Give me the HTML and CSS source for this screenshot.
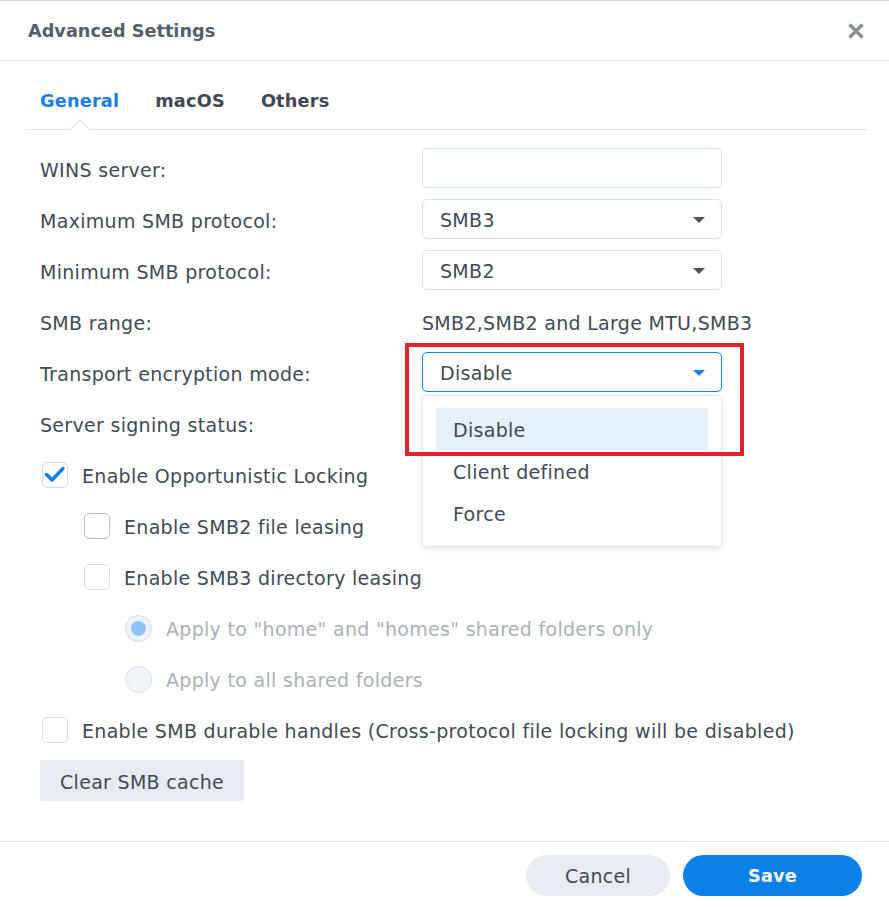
FILE: index.html
```html
<!DOCTYPE html>
<html lang="en">
<head>
<meta charset="utf-8">
<title>Advanced Settings</title>
<link rel="stylesheet" href="styles.css">
</head>
<body>
<div class="dialog">
  <header class="head">
    <h1 class="title">Advanced Settings</h1>
    <span class="close" aria-label="Close">
      <svg width="16" height="16" viewBox="0 0 16 16"><path d="M1.5 1.5 L14.5 14.5 M14.5 1.5 L1.5 14.5" stroke="#8a9096" stroke-width="3.2" fill="none"/></svg>
    </span>
  </header>

  <main class="content">
    <nav class="tabs">
      <span class="tab active">General</span>
      <span class="tab">macOS</span>
      <span class="tab">Others</span>
    </nav>

    <div class="form">
      <div class="row">
        <span class="label">WINS server:</span>
        <div class="field"></div>
      </div>
      <div class="row">
        <span class="label">Maximum SMB protocol:</span>
        <div class="field select"><span>SMB3</span><i class="arrow"></i></div>
      </div>
      <div class="row">
        <span class="label">Minimum SMB protocol:</span>
        <div class="field select"><span>SMB2</span><i class="arrow"></i></div>
      </div>
      <div class="row">
        <span class="label">SMB range:</span>
        <span class="value">SMB2,SMB2 and Large MTU,SMB3</span>
      </div>
      <div class="row">
        <span class="label">Transport encryption mode:</span>
        <div class="field select focused"><span>Disable</span><i class="arrow"></i>
          <div class="menu">
            <div class="item selected">Disable</div>
            <div class="item">Client defined</div>
            <div class="item">Force</div>
          </div>
          <div class="highlight-box"></div>
        </div>
      </div>
      <div class="row">
        <span class="label">Server signing status:</span>
        <span></span>
      </div>

      <div class="check-row">
        <span class="box checked">
          <svg width="26" height="26" viewBox="0 0 26 26"><path d="M4.5 12.5 L10 18 L21 6.5" stroke="#0a7ee8" stroke-width="3.4" fill="none" stroke-linecap="round" stroke-linejoin="round"/></svg>
        </span>
        <span class="text">Enable Opportunistic Locking</span>
      </div>
      <div class="check-row indent">
        <span class="box hover"></span>
        <span class="text">Enable SMB2 file leasing</span>
      </div>
      <div class="check-row indent">
        <span class="box"></span>
        <span class="text">Enable SMB3 directory leasing</span>
      </div>
      <div class="check-row radio-row">
        <span class="radio on"><span class="dot"></span></span>
        <span class="text">Apply to "home" and "homes" shared folders only</span>
      </div>
      <div class="check-row radio-row">
        <span class="radio"></span>
        <span class="text">Apply to all shared folders</span>
      </div>
      <div class="check-row">
        <span class="box"></span>
        <span class="text">Enable SMB durable handles (Cross-protocol file locking will be disabled)</span>
      </div>
      <div class="btn-row">
        <button class="btn plain">Clear SMB cache</button>
      </div>
    </div>
  </main>

  <footer class="foot">
    <button class="btn pill cancel">Cancel</button>
    <button class="btn pill save">Save</button>
  </footer>
</div>
</body>
</html>
```

FILE: styles.css
```css
* { box-sizing: border-box; }

html, body {
  margin: 0;
  padding: 0;
  background: #ffffff;
}

body {
  font-family: "DejaVu Sans", "Liberation Sans", sans-serif;
  color: #414b55;
  width: 889px;
  height: 907px;
  overflow: hidden;
}

.dialog {
  height: 907px;
  border-top: 1px solid #cfd2d6;
  display: flex;
  flex-direction: column;
}

.head {
  height: 60px;
  flex: none;
  border-bottom: 1px solid #e4e7eb;
  display: flex;
  align-items: center;
  justify-content: space-between;
  padding: 0 25px 0 28px;
}

.title {
  margin: 0;
  font-size: 17.7px;
  font-weight: bold;
  color: #555f6a;
}

.close {
  display: flex;
  width: 16px;
  height: 16px;
}

.content {
  flex: 1;
  padding: 0 22px 0 28px;
}

.tabs {
  display: flex;
  gap: 36px;
  padding: 27px 12px 15px;
  border-bottom: 1px solid #dbe2ea;
}

.tab {
  position: relative;
  font-size: 17.7px;
  font-weight: bold;
  line-height: 26px;
  letter-spacing: 0.2px;
  color: #3f4852;
}

.tab.active {
  color: #1a7ee6;
}

.tab.active::after {
  content: "";
  position: absolute;
  left: 50%;
  bottom: -22px;
  width: 13px;
  height: 13px;
  margin-left: -6.5px;
  background: #ffffff;
  border-left: 1px solid #dbe2ea;
  border-top: 1px solid #dbe2ea;
  transform: rotate(45deg);
}

.form {
  padding: 18px 0 0 12px;
  display: flex;
  flex-direction: column;
  gap: 11px;
  font-size: 19px;
  letter-spacing: 0.3px;
}

.row {
  display: grid;
  grid-template-columns: 382px 300px;
  align-items: center;
  height: 40px;
}

.label,
.value,
.text {
  padding-top: 3px;
  white-space: nowrap;
}

.field {
  position: relative;
  height: 40px;
  border: 1px solid #d9e1ea;
  border-radius: 5px;
  background: #ffffff;
}

.select {
  display: flex;
  align-items: center;
  padding-left: 17px;
  padding-top: 2px;
}

.arrow {
  position: absolute;
  right: 16px;
  top: 17px;
  width: 0;
  height: 0;
  border-left: 6px solid transparent;
  border-right: 6px solid transparent;
  border-top: 6px solid #4a5360;
}

.select.focused {
  border-color: #1a7ee6;
}

.select.focused .arrow {
  border-top-color: #1a7ee6;
}

.menu {
  position: absolute;
  left: -1px;
  top: 42px;
  width: 300px;
  padding: 12px 13px;
  background: #ffffff;
  border: 1px solid #e3e8ee;
  border-radius: 5px;
  box-shadow: 0 2px 6px rgba(40, 60, 80, 0.12);
  z-index: 5;
}

.item {
  height: 42px;
  display: flex;
  align-items: center;
  padding-left: 17px;
  padding-top: 2px;
  border-radius: 3px;
}

.item.selected {
  background: #e6f0fb;
}

.highlight-box {
  position: absolute;
  left: -18px;
  top: -10px;
  width: 339px;
  height: 113px;
  border: 4px solid #e3212b;
  z-index: 6;
}

.check-row {
  display: flex;
  align-items: center;
  gap: 14px;
  height: 40px;
  padding-left: 2px;
}

.check-row.indent {
  padding-left: 44px;
}

.check-row.radio-row {
  padding-left: 85px;
  color: #abb1b8;
}

.box {
  flex: none;
  width: 26px;
  height: 26px;
  margin-top: 2px;
  border: 1px solid #d5dde7;
  border-radius: 5px;
  background: #ffffff;
  position: relative;
}

.box svg {
  position: absolute;
  left: -1px;
  top: -1px;
}

.box.checked {
  border-color: #c9d8ea;
}

.box.hover {
  border-color: #b7bcc2;
}

.radio {
  flex: none;
  width: 27px;
  height: 27px;
  margin-top: 2px;
  border-radius: 50%;
  border: 1px solid #d5e0ec;
  background: #f2f5f8;
  display: flex;
  align-items: center;
  justify-content: center;
}

.radio.on {
  border-color: #c8dbef;
  background: #eef4fb;
}

.radio .dot {
  width: 15px;
  height: 15px;
  border-radius: 50%;
  background: #8dc4f6;
}

.btn-row {
  display: flex;
}

.btn {
  font-family: inherit;
  font-size: 19px;
  letter-spacing: 0.3px;
  border: none;
  cursor: pointer;
}

.btn.plain {
  height: 41px;
  padding: 2px 20px 0;
  border-radius: 3px;
  background: #e8ecf2;
  color: #414b55;
}

.foot {
  flex: none;
  height: 66px;
  border-top: 1px solid #e4e7eb;
  padding: 13px 27px 0 0;
  display: flex;
  justify-content: flex-end;
  align-items: flex-start;
  gap: 13px;
}

.btn.pill {
  height: 41px;
  border-radius: 21px;
  padding-top: 2px;
}

.cancel {
  width: 144px;
  background: #e8ecf2;
  color: #414b55;
}

.save {
  width: 179px;
  background: #0a80e8;
  color: #ffffff;
  font-weight: bold;
  font-size: 17.7px;
  letter-spacing: 0.2px;
}
```
